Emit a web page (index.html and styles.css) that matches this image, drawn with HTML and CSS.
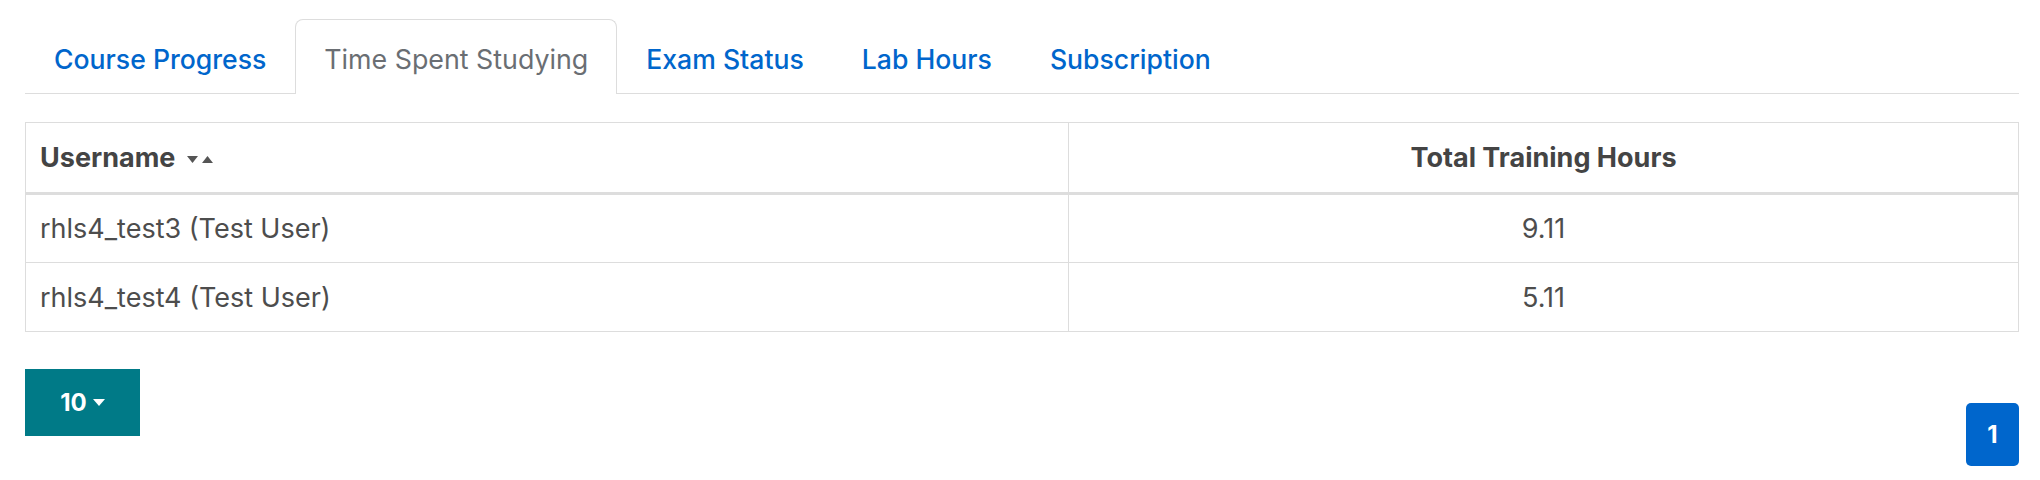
FILE: index.html
```html
<!DOCTYPE html>
<html lang="en">
<head>
<meta charset="utf-8">
<title>Reports</title>
<link rel="stylesheet" href="styles.css">
</head>
<body>
<div class="page">
  <ul class="tabs">
    <li class="tab"><a href="#">Course Progress</a></li>
    <li class="tab active"><a href="#">Time Spent Studying</a></li>
    <li class="tab"><a href="#">Exam Status</a></li>
    <li class="tab"><a href="#">Lab Hours</a></li>
    <li class="tab"><a href="#">Subscription</a></li>
  </ul>

  <table class="grid">
    <thead>
      <tr>
        <th class="col-user">Username
          <span class="sort">
            <svg width="11" height="7" viewBox="0 0 11 7"><path d="M0 0h11L5.5 7z" fill="#555"/></svg>
            <svg width="11" height="7" viewBox="0 0 11 7"><path d="M0 7h11L5.5 0z" fill="#555"/></svg>
          </span>
        </th>
        <th class="col-hours">Total Training Hours</th>
      </tr>
    </thead>
    <tbody>
      <tr><td>rhls4_test3 (Test User)</td><td class="num">9.11</td></tr>
      <tr><td>rhls4_test4 (Test User)</td><td class="num">5.11</td></tr>
    </tbody>
  </table>

  <div class="footer">
    <button class="size-btn">10 <svg width="12" height="7" viewBox="0 0 12 7"><path d="M0 0h12L6 7z" fill="#fff"/></svg></button>
    <div class="pager"><span class="page-num">1</span></div>
  </div>
</div>
</body>
</html>
```

FILE: styles.css
```css
* { box-sizing: border-box; }
html, body { margin: 0; padding: 0; background: #fff; }
body {
  font-family: Inter, "Open Sans", "Liberation Sans", sans-serif;
  color: #4d4d4d;
}
.page {
  padding: 19px 21px 0 25px;
}
.tabs {
  list-style: none;
  margin: 0;
  padding: 0;
  display: flex;
  border-bottom: 1px solid #ddd;
  height: 75px;
}
.tab {
  display: flex;
  align-items: center;
  padding: 0 28px 0 28px;
  border: 1px solid transparent;
  border-bottom: none;
  border-radius: 8px 8px 0 0;
  margin-bottom: -1px;
}
.tab a {
  font-size: 26.6px;
  font-weight: 500;
  color: #0066cc;
  text-decoration: none;
  padding-top: 4px;
}
.tab.active {
  border-color: #ddd;
  background: #fff;
  height: 75px;
}
.tab.active a { color: #6a6e73; font-weight: 400; font-size: 26.8px; }

.grid {
  margin-top: 28px;
  width: 100%;
  border-collapse: collapse;
  font-size: 27px;
}
.grid th, .grid td {
  border: 1px solid #ddd;
  padding: 0 14px;
}
.grid th {
  height: 71px;
  font-weight: 700;
  color: #444;
  border-bottom: 3px solid #ddd;
}
.col-user { text-align: left; width: 1043px; }
.col-hours { text-align: center; }
.sort { display: inline-flex; gap: 4px; margin-left: 5px; vertical-align: middle; }
.grid td { height: 69px; color: #4d4d4d; }
.grid td.num { text-align: center; }

.footer {
  display: flex;
  justify-content: space-between;
  align-items: flex-start;
  margin-top: 37px;
}
.size-btn {
  width: 115px;
  height: 67px;
  background: #007a87;
  border: none;
  color: #fff;
  font-family: inherit;
  font-weight: 700;
  font-size: 24px;
  display: flex;
  align-items: center;
  justify-content: center;
  gap: 6px;
  padding: 0;
}
.pager { padding-top: 34px; }
.page-num {
  display: flex;
  align-items: center;
  justify-content: center;
  width: 53px;
  height: 63px;
  background: #0066cc;
  color: #fff;
  border-radius: 5px;
  font-weight: 700;
  font-size: 24px;
}
```
